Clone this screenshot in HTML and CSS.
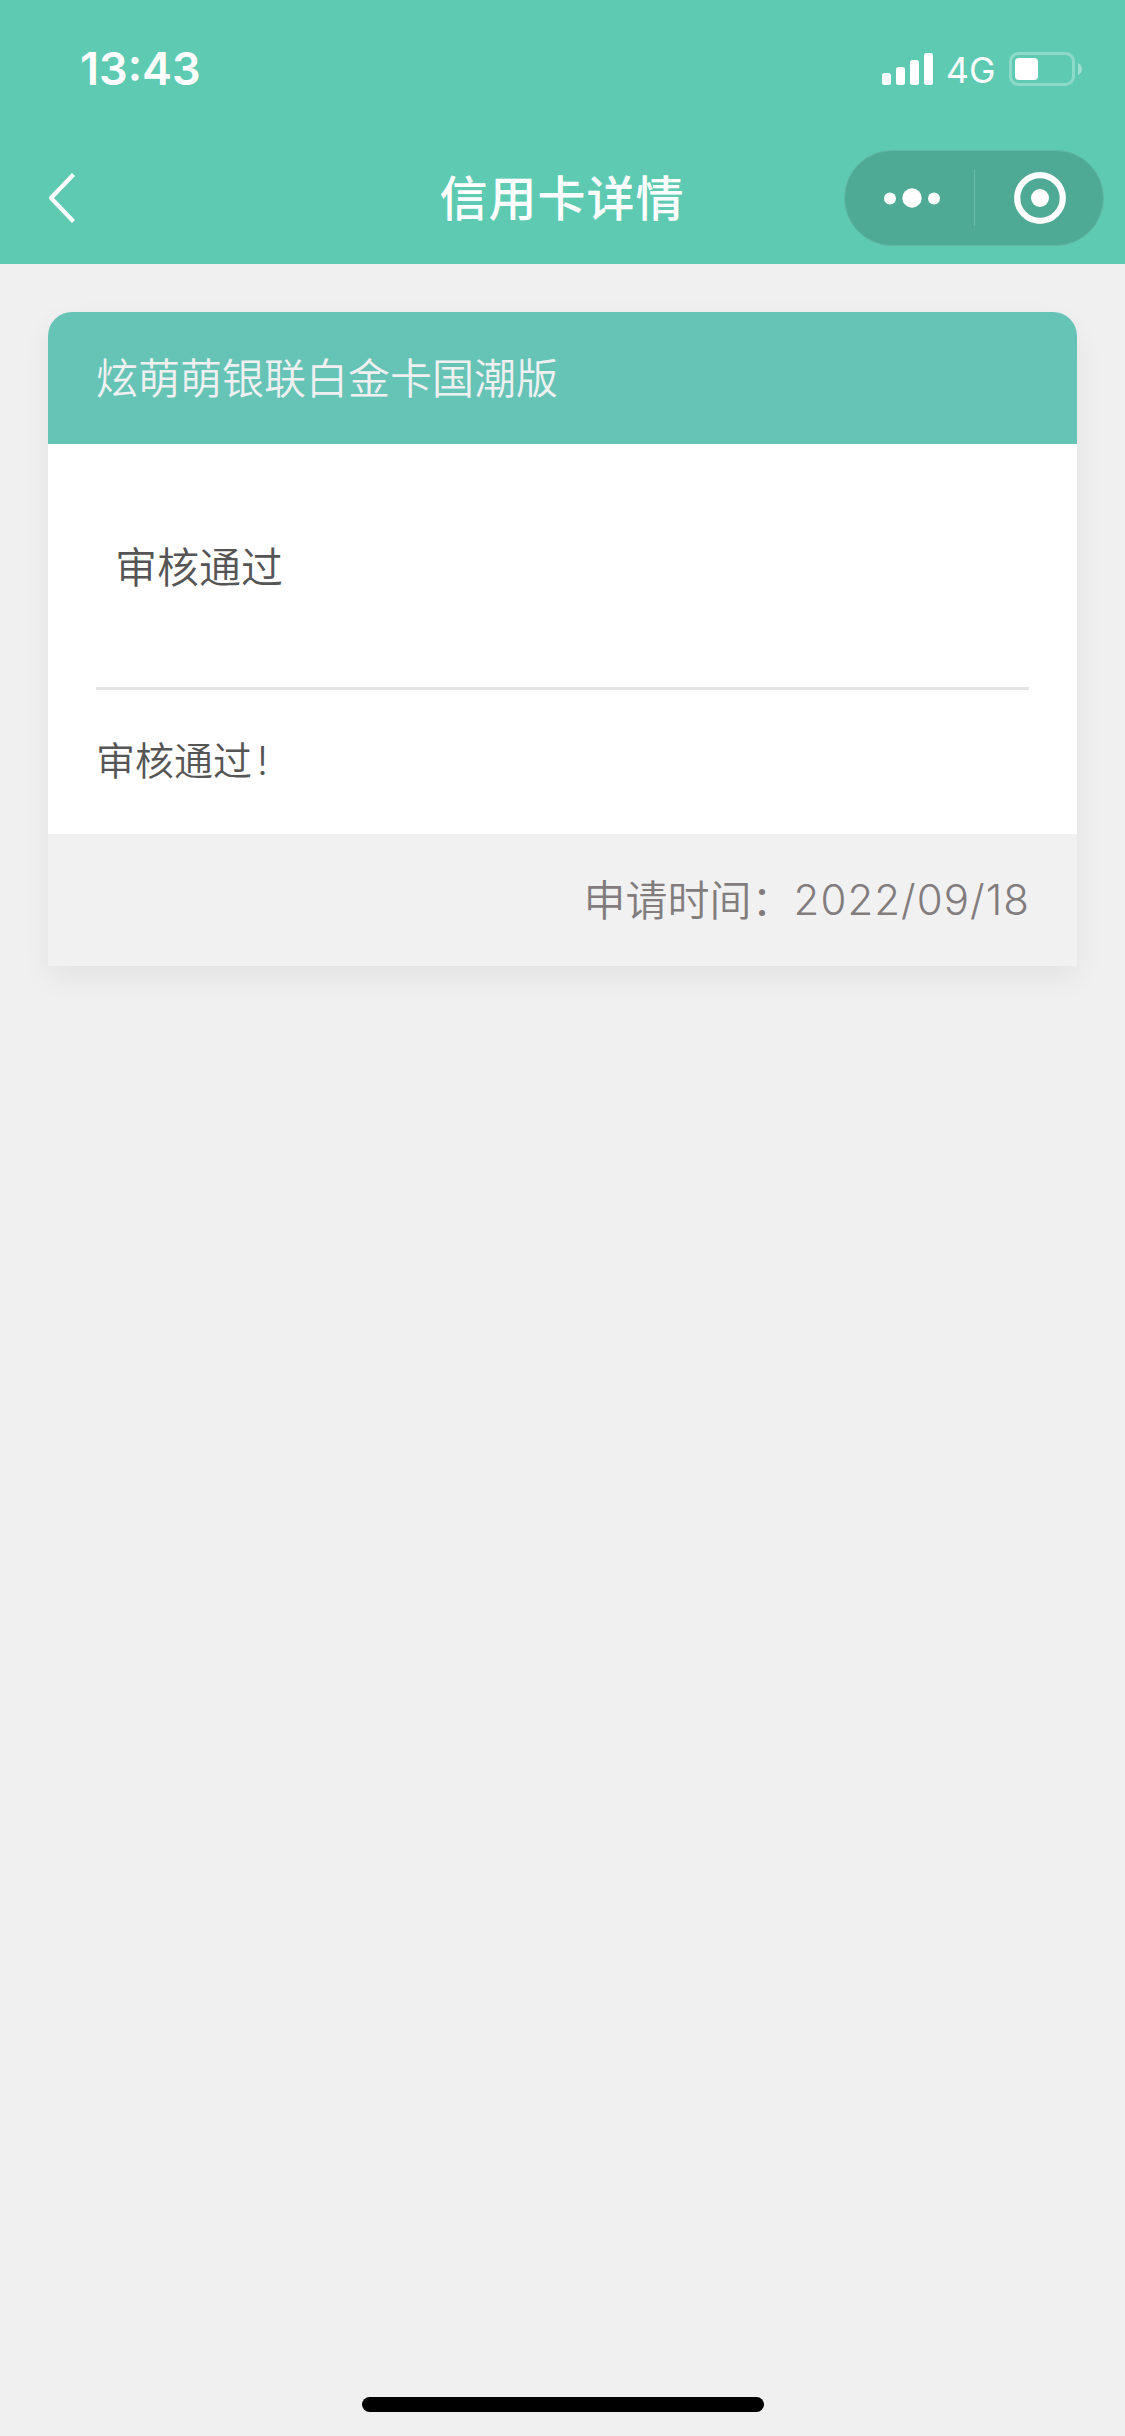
FILE: index.html
```html
<!DOCTYPE html>
<html lang="zh-CN">
<head>
<meta charset="utf-8">
<title>信用卡详情</title>
<link rel="stylesheet" href="styles.css">
</head>
<body>
<header class="header">
  <div class="status">
    <span class="time">13:43</span>
    <div class="indicators">
      <svg class="signal" width="51" height="32" viewBox="0 0 51 32" fill="#fff"><rect y="20" width="9" height="12" rx="2.5"/><rect x="14" y="14" width="9" height="18" rx="2.5"/><rect x="28" y="7" width="9" height="25" rx="2.5"/><rect x="42" width="9" height="32" rx="2.5"/></svg>
      <span class="network">4G</span>
      <svg class="battery" width="73" height="34" viewBox="0 0 73 34"><rect x="1.5" y="1.5" width="63" height="31" rx="8" fill="none" stroke="#fff" stroke-opacity=".3" stroke-width="3"/><rect x="6" y="6" width="23" height="22" rx="4" fill="#fff"/><path d="M69 11Q73 13 73 17Q73 21 69 23Z" fill="#fff" fill-opacity=".4"/></svg>
    </div>
  </div>
  <nav class="nav">
    <svg class="back" width="28" height="52" viewBox="0 0 28 52" fill="none" stroke="#fff" stroke-width="4.2" stroke-linejoin="round"><path d="M25.5 2.5L3 26L25.5 49.5"/></svg>
    <h1 class="title">信用卡详情</h1>
    <div class="capsule">
      <svg width="56" height="20" viewBox="0 0 56 20" fill="#fff"><circle cx="6" cy="10.5" r="6"/><circle cx="28" cy="10" r="9.7"/><circle cx="50" cy="10.5" r="6"/></svg>
      <span class="divider"></span>
      <svg width="52" height="52" viewBox="0 0 52 52"><circle cx="26" cy="26" r="22.8" fill="none" stroke="#fff" stroke-width="6.2"/><circle cx="26" cy="26" r="9" fill="#fff"/></svg>
    </div>
  </nav>
</header>
<main class="content">
  <article class="card">
    <h2 class="card-title">炫萌萌银联白金卡国潮版</h2>
    <div class="card-body">
      <div class="state">审核通过</div>
      <p class="message">审核通过<span class="mark">!</span></p>
    </div>
    <footer class="card-footer"><span>申请时间：</span><span class="date">2022/09/18</span></footer>
  </article>
</main>
<div class="home-bar"></div>
</body>
</html>
```
FILE: styles.css
```css
* { box-sizing: border-box; }
body {
  margin: 0;
  height: 2436px;
  display: flex;
  flex-direction: column;
  background: #f0f0f0;
  font-family: "Noto Sans CJK SC", sans-serif;
  font-weight: 350;
}
svg { display: block; flex: none; }
.header { height: 264px; background: #5ecab2; color: #fff; }
.status {
  height: 132px;
  padding: 6px 43px 0 80px;
  display: flex;
  align-items: center;
  justify-content: space-between;
  font-family: Inter, sans-serif;
}
.time { font-size: 45px; font-weight: 600; line-height: 54px; }
.indicators { display: flex; align-items: center; }
.network { width: 49px; margin: 3px 14px 0 13px; font-size: 35.5px; font-weight: 400; line-height: 42px; white-space: nowrap; }
.nav {
  height: 132px;
  padding: 0 21px;
  display: grid;
  grid-template-columns: 260px 1fr 260px;
  align-items: center;
}
.back { margin-left: 27px; }
.title { margin: 0; padding: 0 1px 5px 0; text-align: center; font-size: 48px; font-weight: 500; line-height: 67px; letter-spacing: 1px; }
.capsule {
  height: 96px;
  padding: 0 37px 0 39px;
  display: flex;
  align-items: center;
  justify-content: space-between;
  border: 1px solid #62b8a4;
  border-radius: 48px;
  background: #4eaa95;
}
.divider { width: 1px; height: 56px; margin-left: -6px; background: #70bbaa; }
.content { flex: 1; padding: 48px; }
.card {
  border-radius: 24px 24px 0 0;
  box-shadow: 0 12px 30px rgba(0, 0, 0, .06);
  color: #555;
  font-size: 42px;
}
.card-title {
  margin: 0;
  height: 132px;
  padding: 0 48px;
  border-radius: 24px 24px 0 0;
  background: #65c4b6;
  color: #f0f0f0;
  font-size: 42px;
  font-weight: 350;
  line-height: 128px;
}
.card-body { height: 390px; padding: 0 48px; background: #fff; }
.state { height: 246px; padding-left: 19px; border-bottom: 3px solid #e4e4e4; line-height: 242px; }
.message { margin: 0; font-size: 39px; line-height: 136px; }
.mark { margin-left: 5px; font-family: Inter, sans-serif; font-weight: 300; }
.card-footer {
  height: 132px;
  padding: 0 48px;
  display: flex;
  justify-content: flex-end;
  background: #f1f1f1;
  color: #827c7d;
  line-height: 128px;
}
.date { margin-right: -1px; font-family: Inter, sans-serif; font-weight: 300; line-height: 132px; letter-spacing: 1.05px; }
.home-bar { width: 402px; height: 15px; margin: 0 auto 24px; border-radius: 8px; background: #000; }
```
